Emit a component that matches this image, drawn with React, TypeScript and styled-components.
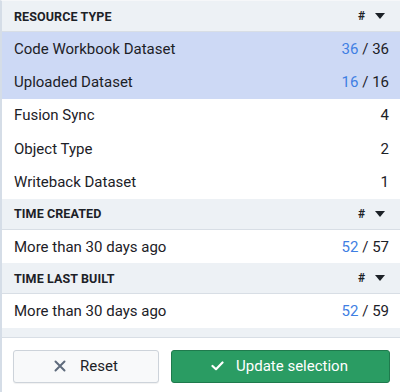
import React from "react";
import styled, { createGlobalStyle } from "styled-components";

const Global = createGlobalStyle`
  html, body { margin: 0; padding: 0; background: #ffffff; }
  * { box-sizing: border-box; }
  body { font-family: Roboto, "Noto Sans", sans-serif; color: #1c2127; }
`;

const Panel = styled.div`
  width: 400px;
  height: 392px;
  display: flex;
  flex-direction: column;
  border-left: 2px solid #d5dde7;
  border-top: 1px solid #f6f7f9;
  background: #ffffff;
`;

const List = styled.div`
  display: flex;
  flex-direction: column;
`;

const SectionHeader = styled.div`
  height: 31px;
  flex-shrink: 0;
  display: flex;
  align-items: center;
  justify-content: space-between;
  padding: 0 15px 0 12px;
  background: #edf1f5;
  border-bottom: 1px solid #d8dee5;
`;

const HeaderTitle = styled.span`
  font-size: 12.5px;
  font-weight: 700;
  letter-spacing: 0.1px;
  color: #1c2127;
`;

const SortControl = styled.span`
  display: flex;
  align-items: center;
  gap: 10px;
  font-size: 12px;
  font-weight: 700;
  color: #1c2127;
`;

const Row = styled.div<{ $selected?: boolean }>`
  height: 33.4px;
  flex-shrink: 0;
  display: flex;
  align-items: center;
  justify-content: space-between;
  padding: 0 11px 0 12px;
  background: ${(p) => (p.$selected ? "#cdd9f5" : "#ffffff")};
  font-size: 15px;
  color: #1c2127;
`;

const Count = styled.span`
  font-size: 15px;
  color: #1c2127;
`;

const Selected = styled.span`
  color: #3f7fe3;
`;

const Spacer = styled.div`
  height: 10px;
  flex-shrink: 0;
  background: #edf1f5;
  border-bottom: 1px solid #d8dee5;
`;

const Footer = styled.div`
  flex: 1;
  display: flex;
  gap: 12px;
  padding: 12px 10px 0 11px;
  background: #ffffff;
`;

const ResetButton = styled.button`
  width: 146px;
  height: 33px;
  display: flex;
  align-items: center;
  justify-content: center;
  gap: 14px;
  background: #f8f9fa;
  border: 1px solid #cdd3da;
  border-radius: 3px;
  font-family: inherit;
  font-size: 15px;
  color: #1c2127;
  box-shadow: 0 1px 1px rgba(17, 20, 24, 0.06);
`;

const UpdateButton = styled.button`
  flex: 1;
  height: 33px;
  display: flex;
  align-items: center;
  justify-content: center;
  gap: 12px;
  padding-left: 4px;
  background: #2a9c63;
  border: 1px solid #1f7a4d;
  border-radius: 3px;
  font-family: inherit;
  font-size: 15px;
  color: #ffffff;
`;

const Caret = () => (
  <svg width="10" height="6" viewBox="0 0 10 6">
    <path d="M0 0 L10 0 L5 6 Z" fill="#1c2127" />
  </svg>
);

const XIcon = () => (
  <svg width="12" height="12" viewBox="0 0 12 12">
    <path d="M1.5 1.5 L10.5 10.5 M10.5 1.5 L1.5 10.5" stroke="#5f6b7c" strokeWidth="2" strokeLinecap="round" />
  </svg>
);

const CheckIcon = () => (
  <svg width="13" height="10" viewBox="0 0 13 10">
    <path d="M1.5 5 L5 8.2 L11.5 1.5" stroke="#ffffff" strokeWidth="2.2" fill="none" strokeLinecap="round" strokeLinejoin="round" />
  </svg>
);

type Item = { label: string; sel?: number; total: number; highlighted?: boolean };

const Section = ({ title, items }: { title: string; items: Item[] }) => (
  <>
    <SectionHeader>
      <HeaderTitle>{title}</HeaderTitle>
      <SortControl>
        #
        <Caret />
      </SortControl>
    </SectionHeader>
    {items.map((it) => (
      <Row key={it.label} $selected={it.highlighted}>
        <span>{it.label}</span>
        <Count>
          {it.sel !== undefined ? (
            <>
              <Selected>{it.sel}</Selected> / {it.total}
            </>
          ) : (
            it.total
          )}
        </Count>
      </Row>
    ))}
  </>
);

export default function App() {
  return (
    <>
      <Global />
      <Panel>
        <List>
          <Section
            title="RESOURCE TYPE"
            items={[
              { label: "Code Workbook Dataset", sel: 36, total: 36, highlighted: true },
              { label: "Uploaded Dataset", sel: 16, total: 16, highlighted: true },
              { label: "Fusion Sync", total: 4 },
              { label: "Object Type", total: 2 },
              { label: "Writeback Dataset", total: 1 },
            ]}
          />
          <Section title="TIME CREATED" items={[{ label: "More than 30 days ago", sel: 52, total: 57 }]} />
          <Section title="TIME LAST BUILT" items={[{ label: "More than 30 days ago", sel: 52, total: 59 }]} />
          <Spacer />
        </List>
        <Footer>
          <ResetButton>
            <XIcon />
            Reset
          </ResetButton>
          <UpdateButton>
            <CheckIcon />
            Update selection
          </UpdateButton>
        </Footer>
      </Panel>
    </>
  );
}
